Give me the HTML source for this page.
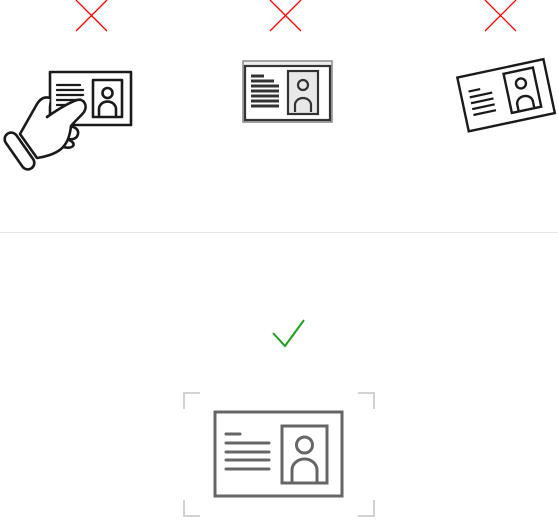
<!DOCTYPE html>
<html><head><style>body{margin:0;background:#fff;width:558px;height:518px;overflow:hidden}</style></head>
<body>
<svg width="558" height="518" viewBox="0 0 558 518" xmlns="http://www.w3.org/2000/svg">
<g stroke="#f00" stroke-width="1.3">
<path d="M76 0L107 31M107 0L76 31"/>
<path d="M270 0L301 31M301 0L270 31"/>
<path d="M485 0L516 31M516 0L485 31"/>
</g>
<!-- card 1 with hand -->
<g fill="none" stroke="#1a1a1a" stroke-width="2.6" stroke-linejoin="round" stroke-linecap="round">
<rect x="50" y="72" width="81" height="53" fill="#fff"/>
<rect x="93" y="80" width="29" height="37"/>
<circle cx="107.5" cy="93" r="5"/>
<path d="M99 115v-6a8 7 0 0 1 17 0v6"/>
<path d="M57 85h23M57 90h26M57 95h26M57 100h24M57 105h18M57 110h12" stroke-width="2.3"/>
<path d="M67 126C74 126 79 129 78 134C77 139 72 140 67 139M65 139C71 140 75 143 73 146C71 148 67 148 63 147" fill="#fff"/>
<path d="M50 98C44 96 40 99 37 104L20 134L37 158C45 157 55 154 61 149C67 144 70 136 71 126C75 121 81 116 84 112C88 106 84 98 77 100C68 103 57 110 47 117" fill="#fff"/>
<rect x="13" y="130" width="13" height="42" rx="6.5" transform="rotate(-35 19.5 151)" fill="#fff"/>
</g>
<!-- card 2 -->
<g fill="none" stroke="#333" stroke-width="2.2">
<rect x="243" y="61" width="89" height="61" stroke="#888" stroke-width="1.5" fill="#eee"/>
<rect x="245" y="66" width="85" height="54" fill="#fff"/>
<rect x="288" y="71" width="30" height="43" fill="#e8e8e8"/>
<circle cx="303" cy="85" r="5"/>
<path d="M295 112v-7a8 7 0 0 1 16 0v7"/>
<path d="M251 76h13M251 81h23M251 86h28M251 91h28M251 96h28M251 101h28M251 106h28" stroke-width="3"/>
</g>
<!-- card 3 rotated -->
<g transform="rotate(-12 505 95)" fill="none" stroke="#1a1a1a" stroke-width="2.4">
<rect x="462" y="68" width="88" height="55"/>
<rect x="508" y="74" width="30" height="40"/>
<circle cx="523" cy="87" r="5"/>
<path d="M515 113v-6a8 7 0 0 1 16 0v6"/>
<path d="M470 84h12M470 90h23M470 96h23M470 102h23M470 108h23" stroke-width="2.2"/>
</g>
<line x1="0" y1="232.5" x2="558" y2="232.5" stroke="#e6e6e6"/>
<path d="M273 333L285 346L304 320" fill="none" stroke="#1fa01f" stroke-width="2"/>
<g fill="none" stroke="#ccc" stroke-width="1.8">
<path d="M184 409V393H200M358 393H374V409M184 500V516H200M358 516H374V500"/>
</g>
<g fill="none" stroke="#666" stroke-width="3">
<rect x="215" y="412" width="127" height="84"/>
<rect x="282" y="426" width="45" height="57"/>
<circle cx="304.5" cy="445" r="8"/>
<path d="M292 483v-13a12.5 11 0 0 1 25 0v13"/>
<path d="M226 434h14M226 443h43M226 452h43M226 460h43M226 469h43" stroke-linecap="round"/>
</g>
</svg>
</body></html>
